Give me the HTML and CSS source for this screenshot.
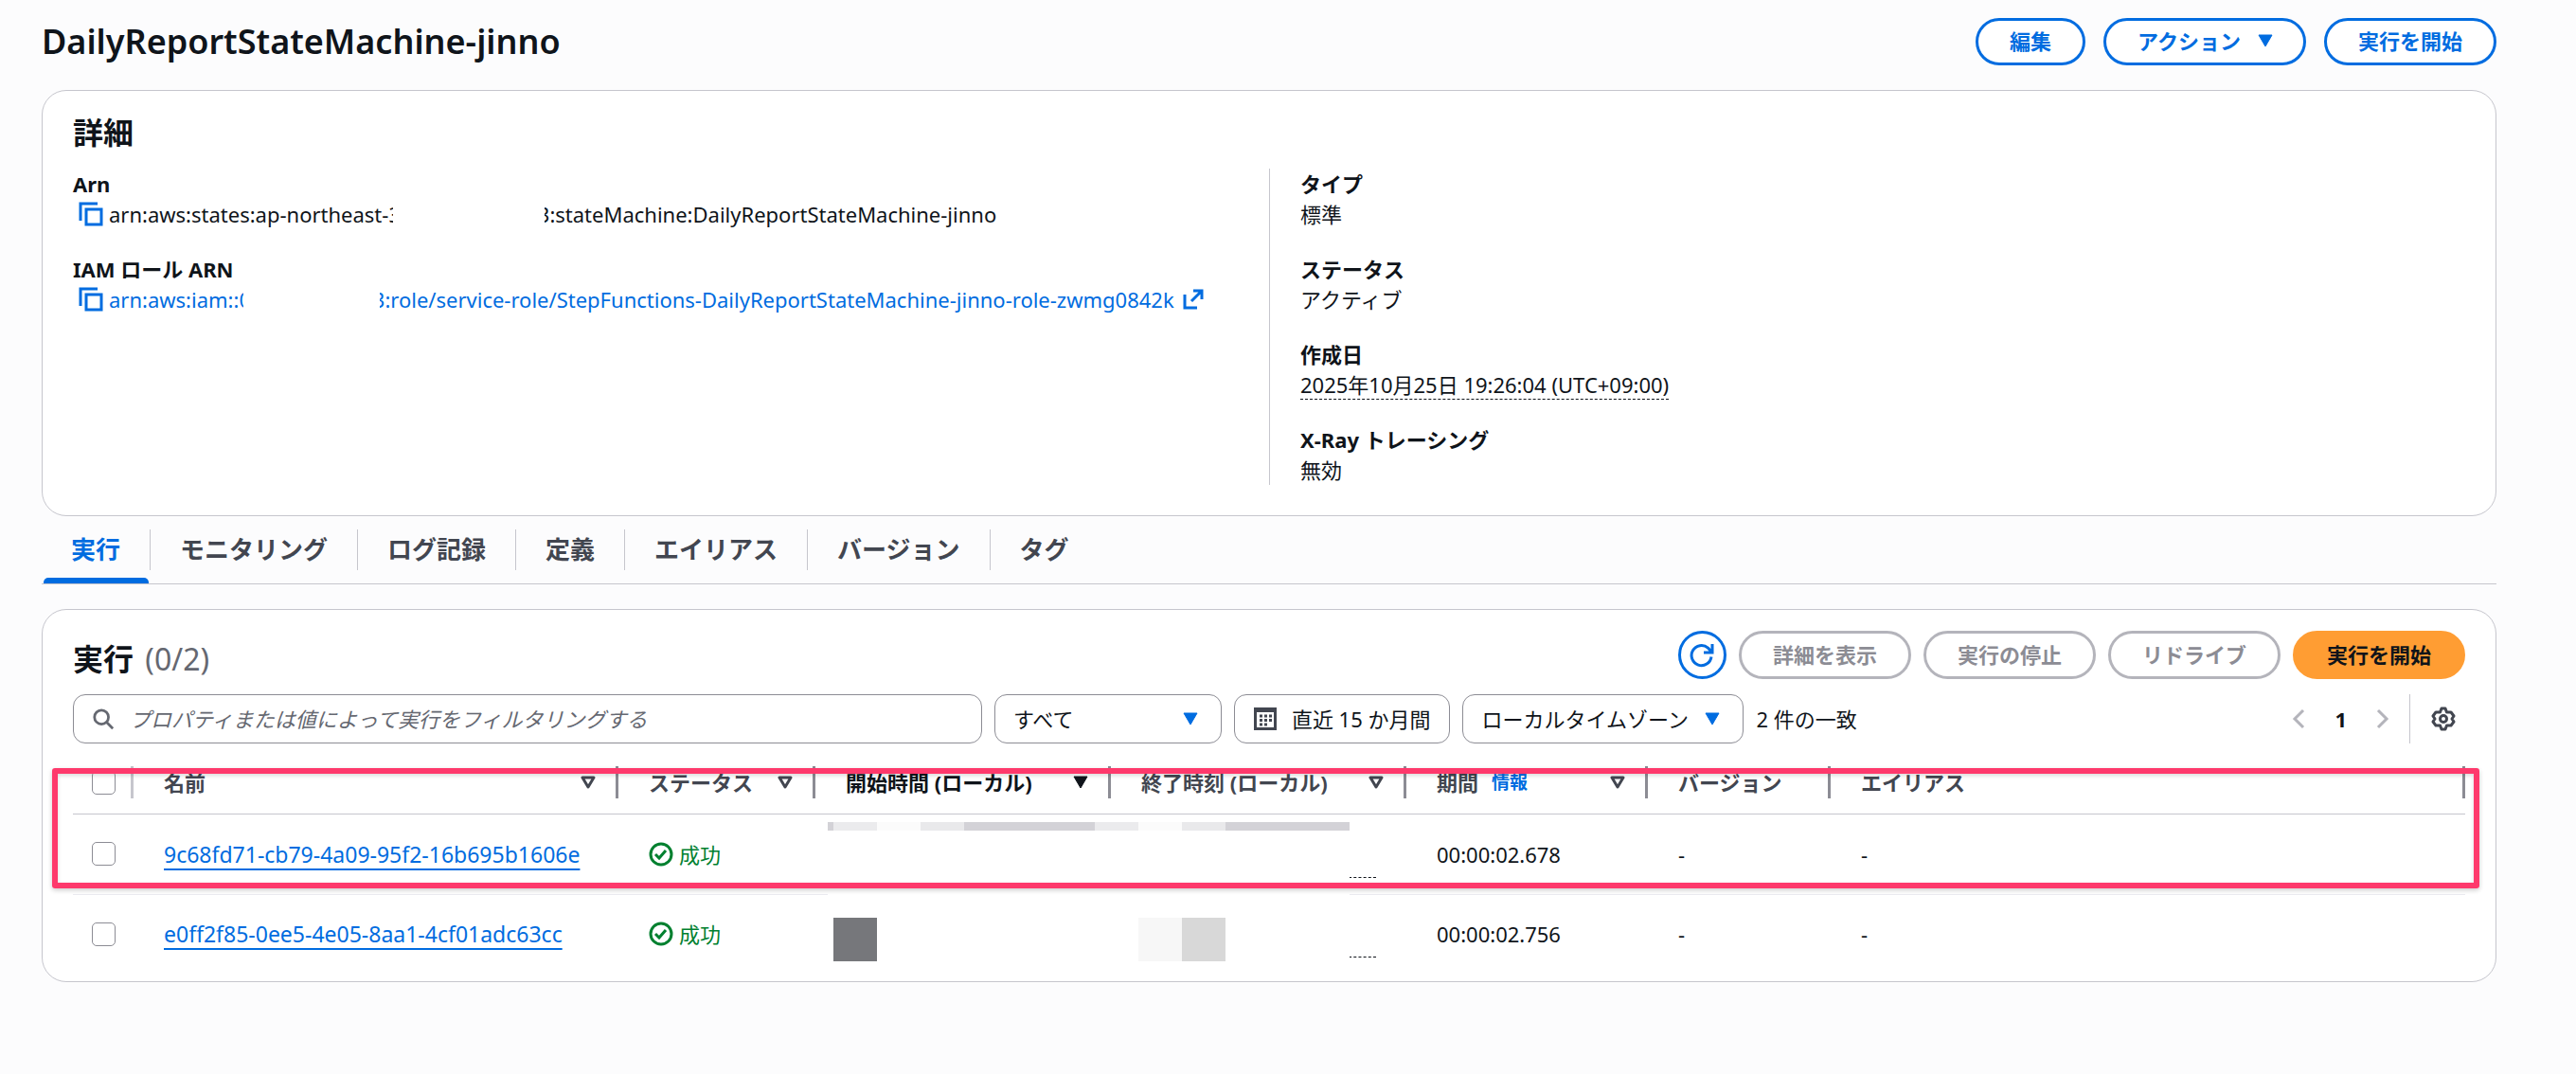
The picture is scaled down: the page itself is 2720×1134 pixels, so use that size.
FILE: index.html
```html
<!DOCTYPE html>
<html lang="ja">
<head>
<meta charset="utf-8">
<meta name="viewport" content="width=device-width, initial-scale=1">
<title>DailyReportStateMachine-jinno</title>
<link rel="stylesheet" href="styles.css">
</head>
<body>
<svg class="defs" aria-hidden="true">
  <symbol id="copy" viewBox="0 0 26 26"><path d="M2 20V2h18" fill="none" stroke="currentColor" stroke-width="3"/><rect x="8" y="8" width="16" height="16" fill="none" stroke="currentColor" stroke-width="3"/></symbol>
  <symbol id="external" viewBox="0 0 22 22"><path d="M2 6v14h13M11 2h9v9M20 2L9 13" fill="none" stroke="currentColor" stroke-width="3"/></symbol>
  <symbol id="caret" viewBox="0 0 16 14"><path d="M1 1h14L8 13z" fill="currentColor" stroke="currentColor" stroke-width="1" stroke-linejoin="round"/></symbol>
  <symbol id="sort" viewBox="0 0 16 14"><path d="M2 2h12L8 12z" fill="none" stroke="currentColor" stroke-width="3" stroke-linejoin="round"/></symbol>
  <symbol id="success" viewBox="0 0 26 26"><circle cx="13" cy="13" r="11" fill="none" stroke="currentColor" stroke-width="3"/><path d="M7 13l4 4 7-8" fill="none" stroke="currentColor" stroke-width="3"/></symbol>
</svg>
<main class="page">
  <header class="page-header">
    <h1 class="title">DailyReportStateMachine-jinno</h1>
    <div class="header-actions">
      <button class="btn" type="button">編集</button>
      <button class="btn btn-menu" type="button">アクション<svg class="caret"><use href="#caret"/></svg></button>
      <button class="btn" type="button">実行を開始</button>
    </div>
  </header>

  <section class="card details">
    <h2 class="heading">詳細</h2>
    <div class="columns">
      <dl class="column">
        <div>
          <dt>Arn</dt>
          <dd class="arn">
            <button class="icon-btn" type="button" aria-label="コピー"><svg class="copy"><use href="#copy"/></svg></button>
            <span>arn:aws:states:ap-northeast-</span><span class="cut cut-end">3</span><span class="redacted-account"></span><span class="cut cut-start">3</span><span>:stateMachine:DailyReportStateMachine-jinno</span>
          </dd>
        </div>
        <div>
          <dt>IAM ロール ARN</dt>
          <dd class="arn">
            <button class="icon-btn" type="button" aria-label="コピー"><svg class="copy"><use href="#copy"/></svg></button>
            <a class="arn-link" href="#role"><span>arn:aws:iam::</span><span class="cut cut-end">0</span><span class="redacted-role"></span><span class="cut cut-start">3</span><span>:role/service-role/StepFunctions-DailyReportStateMachine-jinno-role-zwmg0842k</span><svg class="external"><use href="#external"/></svg></a>
          </dd>
        </div>
      </dl>
      <dl class="column">
        <div><dt>タイプ</dt><dd>標準</dd></div>
        <div><dt>ステータス</dt><dd>アクティブ</dd></div>
        <div><dt>作成日</dt><dd><span class="date">2025年10月25日 19:26:04 (UTC+09:00)</span></dd></div>
        <div><dt>X-Ray トレーシング</dt><dd>無効</dd></div>
      </dl>
    </div>
  </section>

  <nav class="tabs">
    <a class="tab active" href="#executions" aria-current="page"><span>実行</span></a>
    <a class="tab" href="#monitoring"><span>モニタリング</span></a>
    <a class="tab" href="#logging"><span>ログ記録</span></a>
    <a class="tab" href="#definition"><span>定義</span></a>
    <a class="tab" href="#aliases"><span>エイリアス</span></a>
    <a class="tab" href="#versions"><span>バージョン</span></a>
    <a class="tab" href="#tags"><span>タグ</span></a>
  </nav>

  <section class="card executions" id="executions">
    <div class="exec-header">
      <h2 class="heading">実行 <span class="count">(0/2)</span></h2>
      <div class="exec-actions">
        <button class="btn btn-round" type="button" aria-label="更新"><svg class="refresh" viewBox="0 0 26 26"><path d="M23 14.500a10.500 10.500 0 1 1-3.500-9.300L23 9M24 1v9h-9" fill="none" stroke="currentColor" stroke-width="3"/></svg></button>
        <button class="btn" type="button" disabled>詳細を表示</button>
        <button class="btn" type="button" disabled>実行の停止</button>
        <button class="btn" type="button" disabled>リドライブ</button>
        <button class="btn btn-primary" type="button">実行を開始</button>
      </div>
    </div>

    <div class="filters">
      <label class="field search">
        <svg class="search-icon" viewBox="0 0 26 26"><circle cx="11" cy="11" r="8" fill="none" stroke="currentColor" stroke-width="3"/><path d="M16 16l8 8" stroke="currentColor" stroke-width="3"/></svg>
        <input type="text" aria-label="実行をフィルタリング" placeholder="プロパティまたは値によって実行をフィルタリングする">
      </label>
      <label class="field status-filter">
        <select aria-label="ステータス"><option>すべて</option></select>
        <svg class="caret"><use href="#caret"/></svg>
      </label>
      <button class="field range" type="button">
        <svg class="calendar" viewBox="0 0 24 24"><path d="M1.500 1.500h21v21h-21z" fill="none" stroke="currentColor" stroke-width="3"/><path d="M1 3.500h22" stroke="currentColor" stroke-width="3"/><path d="M6 9h3m2 0h3m2 0h3M6 13.500h3m2 0h3m2 0h3M6 18h3m2 0h3" stroke="currentColor" stroke-width="3"/></svg>
        直近 15 か月間
      </button>
      <label class="field timezone">
        <select aria-label="タイムゾーン"><option>ローカルタイムゾーン</option></select>
        <svg class="caret"><use href="#caret"/></svg>
      </label>
      <span>2 件の一致</span>
      <div class="pager">
        <button class="icon-btn arrow" type="button" aria-label="前へ" disabled><svg viewBox="0 0 14 22"><path d="M12 2L3 11l9 9" fill="none" stroke="currentColor" stroke-width="3"/></svg></button>
        <span class="page-number">1</span>
        <button class="icon-btn arrow" type="button" aria-label="次へ" disabled><svg viewBox="0 0 14 22"><path d="M2 2l9 9-9 9" fill="none" stroke="currentColor" stroke-width="3"/></svg></button>
      </div>
      <div class="settings">
        <button class="icon-btn" type="button" aria-label="設定"><svg class="gear" viewBox="0 0 26 26" fill="none" stroke="currentColor" stroke-width="3" stroke-linejoin="round"><path d="M11 2h4l1.500 4H21l3 4-2 3 2 3-3 4h-4.500L15 24h-4l-1.500-4H5l-3-4 2-3-2-3 3-4h4.500z"/><circle cx="13" cy="13" r="3.500"/></svg></button>
      </div>
    </div>

    <div class="table-area">
      <table class="table">
        <colgroup>
          <col class="c-check"><col class="c-name"><col class="c-status"><col class="c-time"><col class="c-time"><col class="c-duration"><col class="c-version"><col>
        </colgroup>
        <thead>
          <tr>
            <th class="check"><div class="th"><input type="checkbox" aria-label="すべて選択"></div></th>
            <th><div class="th">名前<svg class="caret"><use href="#sort"/></svg></div></th>
            <th><div class="th">ステータス<svg class="caret"><use href="#sort"/></svg></div></th>
            <th class="sorted"><div class="th">開始時間 (ローカル)<svg class="caret"><use href="#caret"/></svg></div></th>
            <th><div class="th">終了時刻 (ローカル)<svg class="caret"><use href="#sort"/></svg></div></th>
            <th><div class="th">期間<a class="info" href="#info">情報</a><svg class="caret"><use href="#sort"/></svg></div></th>
            <th><div class="th">バージョン</div></th>
            <th><div class="th">エイリアス</div></th>
          </tr>
        </thead>
        <tbody>
          <tr>
            <td class="check"><input type="checkbox" aria-label="9c68fd71を選択"></td>
            <td><a class="name" href="#9c68fd71">9c68fd71-cb79-4a09-95f2-16b695b1606e</a></td>
            <td><span class="status"><svg><use href="#success"/></svg>成功</span></td>
            <td></td>
            <td class="end-time"><span></span></td>
            <td>00:00:02.678</td>
            <td>-</td>
            <td>-</td>
          </tr>
          <tr>
            <td class="check"><input type="checkbox" aria-label="e0ff2f85を選択"></td>
            <td><a class="name" href="#e0ff2f85">e0ff2f85-0ee5-4e05-8aa1-4cf01adc63cc</a></td>
            <td><span class="status"><svg><use href="#success"/></svg>成功</span></td>
            <td></td>
            <td class="end-time"><span></span></td>
            <td>00:00:02.756</td>
            <td>-</td>
            <td>-</td>
          </tr>
        </tbody>
      </table>
      <svg class="mosaic" viewBox="0 0 551 160" aria-hidden="true" shape-rendering="crispEdges">
        <rect width="551" height="160" fill="#fff"/>
        <rect width="551" height="9" fill="#d3d2d7"/>
        <rect x="6" width="46" height="9" fill="#ebebed"/>
        <rect x="52" width="46" height="9" fill="#fbfbfb"/>
        <rect x="98" width="46" height="9" fill="#e9e9eb"/>
        <rect x="282" width="46" height="9" fill="#ebebed"/>
        <rect x="328" width="46" height="9" fill="#fbfbfb"/>
        <rect x="374" width="46" height="9" fill="#e9e9eb"/>
        <rect x="6" y="101" width="46" height="46" fill="#76777b"/>
        <rect x="328" y="101" width="46" height="46" fill="#f7f7f7"/>
        <rect x="374" y="101" width="46" height="46" fill="#d8d8d8"/>
      </svg>
      <div class="highlight"></div>
    </div>
  </section>
</main>
</body>
</html>
```
FILE: styles.css
```css
* {
  box-sizing: border-box;
}

body {
  margin: 0;
  background: #fcfcfd;
  color: #0f141a;
  font: 22px/32px "Noto Sans", "Noto Sans CJK JP", sans-serif;
}

button,
input,
select {
  font: inherit;
  color: inherit;
}

h1,
h2,
dl,
dd {
  margin: 0;
}

a {
  color: #006ce0;
  text-decoration: none;
}

svg {
  flex: none;
  display: block;
}

.defs {
  position: absolute;
  width: 0;
  height: 0;
}

.page {
  padding: 19px 84px 96px 44px;
}

.page-header {
  display: flex;
  justify-content: space-between;
  align-items: center;
  margin-bottom: 26px;
}

.title {
  font-size: 36px;
  font-weight: 600;
  line-height: 50px;
}

.header-actions {
  display: flex;
  gap: 19px;
}

.btn {
  display: flex;
  align-items: center;
  justify-content: center;
  height: 50px;
  padding: 0 33px 2px;
  border: 3px solid #006ce0;
  border-radius: 26px;
  background: #fff;
  color: #006ce0;
  font-weight: 700;
  white-space: nowrap;
}

.btn:disabled {
  border-color: #b4b4bb;
  color: #8c8c94;
}

.btn-menu {
  gap: 18px;
  padding-right: 32px;
}

.btn-primary {
  border-color: #ff9d33;
  background: #ff9d33;
  color: #0f141a;
}

.exec-actions .btn {
  height: 51px;
}

.exec-actions .btn-round {
  width: 51px;
  padding: 0;
}

.caret {
  width: 16px;
  height: 14px;
}

.refresh {
  width: 26px;
  height: 26px;
}

.icon-btn {
  display: flex;
  padding: 0;
  border: 0;
  background: none;
}

.card {
  border: 1px solid #c6c6cd;
  border-radius: 26px;
  background: #fff;
}

.heading {
  font-size: 32px;
  font-weight: 700;
  line-height: 40px;
}

.details {
  padding: 24px 32px 32px;
}

.columns {
  display: grid;
  grid-template-columns: 1fr 1fr;
  margin-top: 18px;
}

.column {
  display: flex;
  flex-direction: column;
  gap: 26px;
}

.column + .column {
  border-left: 1px solid #c6c6cd;
  padding-left: 32px;
}

dt {
  font-weight: 700;
}

.arn,
.arn-link {
  display: flex;
  align-items: center;
  white-space: pre;
}

.arn .icon-btn {
  margin: 0 6px;
  color: #006ce0;
}

.copy {
  width: 26px;
  height: 26px;
}

.cut {
  display: flex;
  overflow: hidden;
}

.cut-end {
  width: 5px;
}

.cut-start {
  width: 5px;
  justify-content: flex-end;
}

.redacted-account {
  width: 160px;
}

.redacted-role {
  width: 144px;
}

.external {
  width: 22px;
  height: 22px;
  margin-left: 9px;
}

.date {
  border-bottom: 1px dashed #0f141a;
}

.tabs {
  display: flex;
  padding-top: 14px;
  border-bottom: 1px solid #c6c6cd;
}

.tab {
  padding-bottom: 14px;
  color: #424650;
  font-size: 26px;
  font-weight: 700;
}

.tab span {
  display: block;
  padding: 0 31px;
  border-right: 1px solid #c6c6cd;
  line-height: 43px;
}

.tab:last-child span {
  border-right: 0;
}

.tab.active {
  padding-bottom: 0;
  color: #006ce0;
}

.tab.active::after {
  content: "";
  display: block;
  height: 6px;
  margin: 8px 2px 0;
  border-radius: 5px 5px 0 0;
  background: #006ce0;
}

.executions {
  margin-top: 26px;
  padding: 22px 32px 8px;
}

.exec-header {
  display: flex;
  justify-content: space-between;
  align-items: center;
}

.executions .heading {
  padding-top: 8px;
}

.count {
  margin-left: 4px;
  color: #656871;
  font-weight: 400;
}

.exec-actions {
  display: flex;
  gap: 13px;
}

.filters {
  display: flex;
  align-items: center;
  gap: 13px;
  margin-top: 16px;
}

.field {
  display: flex;
  align-items: center;
  height: 52px;
  padding: 0 20px;
  border: 1px solid #8c8c94;
  border-radius: 13px;
  background: #fff;
  white-space: nowrap;
}

.search {
  flex: 0 1 38%;
  gap: 16px;
  padding: 0 19px;
  color: #656871;
}

.search input {
  flex: 1;
  min-width: 0;
  padding: 0;
  border: 0;
  outline: 0;
  background: none;
}

.search input::placeholder {
  color: #656871;
  font-style: italic;
  opacity: 1;
}

.search-icon {
  width: 24px;
  height: 24px;
}

.field select {
  flex: 1;
  min-width: 0;
  padding: 0;
  border: 0;
  background: none;
  appearance: none;
}

.field .caret {
  color: #006ce0;
}

.status-filter {
  width: 240px;
  padding: 0 24px 0 19px;
}

.timezone {
  width: 297px;
  padding: 0 24px 0 19px;
}

.range {
  gap: 16px;
}

.calendar {
  width: 24px;
  height: 24px;
  color: #424650;
}

.pager {
  display: flex;
  align-items: center;
  gap: 31px;
  margin-left: auto;
}

.arrow {
  color: #b4b4bb;
}

.arrow svg {
  width: 14px;
  height: 22px;
}

.page-number {
  font-weight: 700;
}

.settings {
  display: flex;
  align-items: center;
  height: 52px;
  margin-left: 8px;
  padding: 0 10px 0 22px;
  border-left: 1px solid #c6c6cd;
  color: #424650;
}

.gear {
  width: 26px;
  height: 26px;
}

.table-area {
  position: relative;
  margin-top: 9px;
}

.table {
  width: 100%;
  border-collapse: collapse;
  table-layout: fixed;
}

.c-check {
  width: 64px;
}

.c-name {
  width: 512px;
}

.c-status {
  width: 208px;
}

.c-time {
  width: 312px;
}

.c-duration {
  width: 255px;
}

.c-version {
  width: 193px;
}

th {
  height: 65px;
  padding: 0;
  border-bottom: 1px solid #c6c6cd;
  color: #424650;
  text-align: left;
}

.th {
  display: flex;
  align-items: center;
  height: 34px;
  padding: 0 21px 0 32px;
  border-right: 3px solid #8c8c94;
}

.th .caret {
  margin-left: auto;
}

.check .th {
  padding: 0 0 0 20px;
  border-color: #c6c6cd;
}

.sorted {
  color: #0f141a;
}

.info {
  margin-left: 14px;
  font-size: 19px;
}

td {
  height: 85px;
  padding: 0 32px;
  border-bottom: 1px solid #ebebf0;
}

td.check {
  padding: 0 0 0 20px;
}

tbody tr:last-child td {
  height: 84px;
  border-bottom: 0;
}

input[type="checkbox"] {
  display: block;
  appearance: none;
  width: 25px;
  height: 25px;
  margin: 0;
  border: 1px solid #8c8c94;
  border-radius: 5px;
  background: #fff;
}

.name {
  font-size: 23px;
  text-decoration: underline;
  text-decoration-thickness: 2px;
  text-underline-offset: 6px;
}

.status {
  display: flex;
  align-items: center;
  gap: 6px;
  color: #00802f;
}

.status svg {
  width: 26px;
  height: 26px;
}

.end-time span {
  display: block;
  width: 60px;
  height: 50px;
  margin-left: auto;
  border-bottom: 1px dashed #0f141a;
}

/* Pixelated cover over the timestamps */
.mosaic {
  position: absolute;
  left: 797px;
  top: 74px;
  width: 551px;
  height: 160px;
}

/* Annotation frame around the newest execution */
.highlight {
  position: absolute;
  top: 17px;
  left: -22px;
  right: -15px;
  height: 127px;
  border: 6px solid #fe396c;
  border-radius: 3px;
  box-shadow: 0 2px 5px rgba(0, 0, 0, 0.2), inset 0 2px 4px rgba(0, 0, 0, 0.15);
}
```
